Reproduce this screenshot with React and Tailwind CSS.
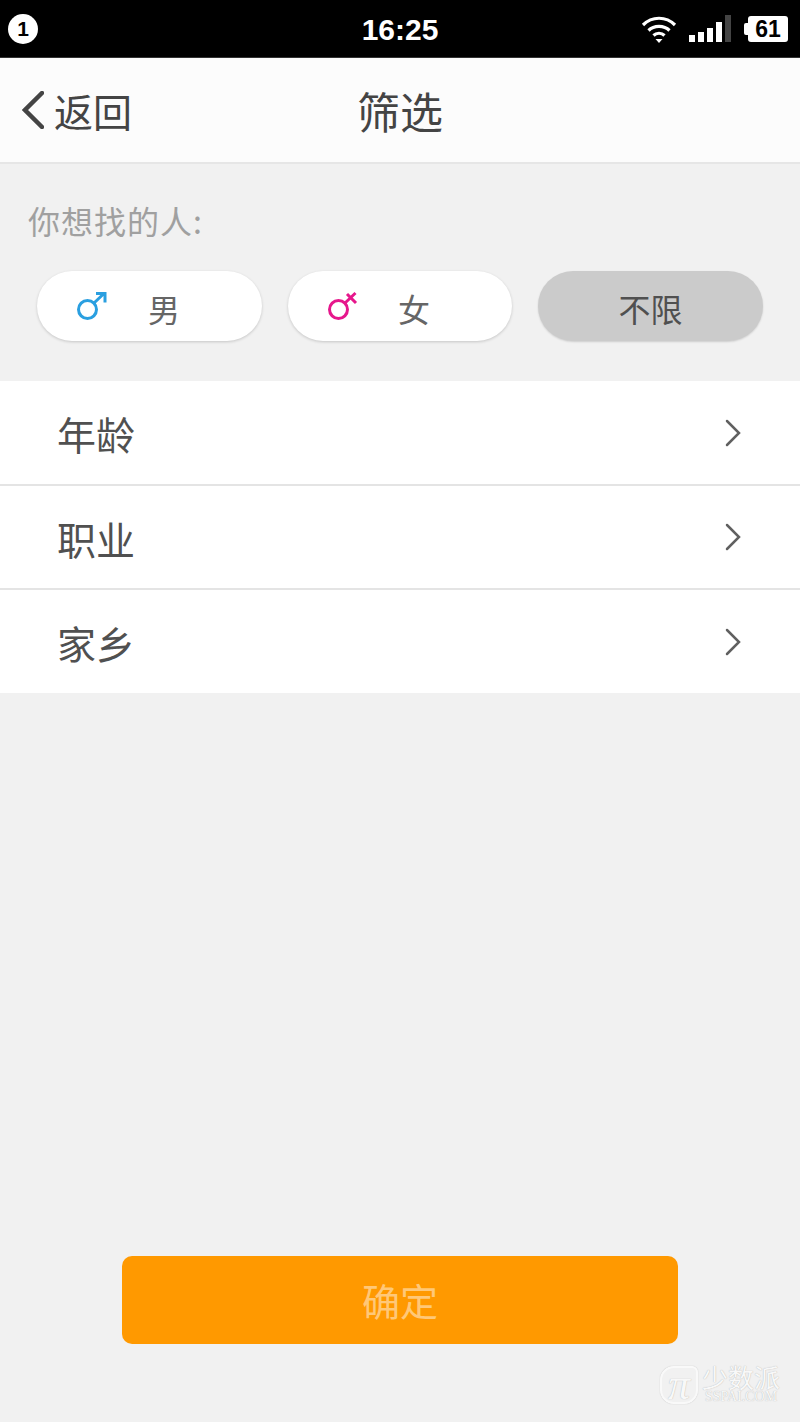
const cjk = { fontFamily: '"Noto Sans CJK SC", "Noto Sans", sans-serif' };
const helv = { fontFamily: '"Liberation Sans", sans-serif' };

function MaleIcon() {
    return (
        <svg width="32" height="32" viewBox="0 0 32 32" fill="none" stroke="#2a9fe0" strokeWidth="3">
            <circle cx="11.5" cy="19.5" r="9" />
            <path d="M18 13 L28 3.5 M20 3.5 H29 V12.5" />
        </svg>
    );
}

function FemaleIcon() {
    return (
        <svg width="32" height="32" viewBox="0 0 32 32" fill="none" stroke="#e6178c" strokeWidth="3">
            <circle cx="11.5" cy="19.5" r="9" />
            <path d="M18 13 L28.5 3 M20 4 L29 13" />
        </svg>
    );
}

function Row({ label, className }) {
    return (
        <div className={`flex items-center justify-between pl-[57px] pr-[58px] ${className}`}>
            <span className="pt-[2px] text-[39px] text-[#505050]">{label}</span>
            <svg width="18" height="28" viewBox="0 0 18 28" fill="none" stroke="#606060" strokeWidth="2.5" strokeLinecap="round">
                <path d="M3 2 L15 14 L3 26" />
            </svg>
        </div>
    );
}

export default function App() {
    return (
        <div className="relative flex h-[1422px] w-[800px] flex-col overflow-hidden bg-[#f1f1f1]" style={cjk}>
            {/* Status bar */}
            <div className="flex h-[58px] items-center justify-between border-b border-[#333] bg-black pl-[8px] pr-[12px]">
                <div className="flex h-[30px] w-[30px] items-center justify-center rounded-full bg-white text-[21px] font-bold text-black" style={helv}>1</div>
                <div className="absolute left-0 right-0 top-[9px] text-center text-[30px] font-bold leading-[42px] text-white" style={helv}>16:25</div>
                <div className="flex items-center">
                    <svg width="36" height="30" viewBox="0 0 36 30" fill="none" stroke="#fff" strokeWidth="3.2">
                        <path d="M2 11 C11 2 25 2 34 11" />
                        <path d="M7.5 16.5 C13 11 23 11 28.5 16.5" />
                        <path d="M12.5 21.5 C15.5 18.5 20.5 18.5 23.5 21.5" />
                        <path d="M14.5 25 L18 29 L21.5 25 Z" fill="#fff" stroke="none" />
                    </svg>
                    <div className="ml-[12px] flex h-[27px] items-end gap-[3px]">
                        <div className="h-[7px] w-[6px] bg-white" />
                        <div className="h-[10px] w-[6px] bg-white" />
                        <div className="h-[14px] w-[6px] bg-white" />
                        <div className="h-[20px] w-[6px] bg-white" />
                        <div className="h-[27px] w-[6px] bg-[#444]" />
                    </div>
                    <div className="ml-[13px] h-[12px] w-[4px] rounded-l-[2px] bg-white" />
                    <div className="flex h-[26px] w-[40px] items-center justify-center rounded-[3px] bg-white pt-[2px] text-[23px] font-bold text-black" style={helv}>61</div>
                </div>
            </div>

            {/* Header */}
            <div className="relative flex h-[106px] items-center justify-center border-b-2 border-[#e6e6e6] bg-[#fcfcfc]">
                <div className="absolute left-[22px] top-0 flex h-full items-center text-[#444]">
                    <svg width="22" height="38" viewBox="0 0 22 38" fill="none" stroke="#444" strokeWidth="4.5" strokeLinecap="round">
                        <path d="M20 2 L3 19 L20 36" />
                    </svg>
                    <span className="ml-[10px] text-[39px] leading-none">返回</span>
                </div>
                <span className="text-[43px] leading-none text-[#444]">筛选</span>
            </div>

            {/* Gender filter */}
            <div className="px-[28px] pt-[36px]">
                <div className="text-[32px] leading-[40px] tracking-[1px] text-[#a0a0a0]">你想找的人:</div>
                <div className="mt-[31px] flex gap-[26px] pl-[9px] pr-[9px]">
                    <button className="flex h-[70px] w-[225px] items-center rounded-full bg-white pl-[39px] text-[32px] text-[#666] shadow-[0_1px_3px_rgba(0,0,0,0.18)]">
                        <MaleIcon />
                        <span className="ml-[40px] pt-[3px]">男</span>
                    </button>
                    <button className="flex h-[70px] w-[224px] items-center rounded-full bg-white pl-[39px] text-[32px] text-[#666] shadow-[0_1px_3px_rgba(0,0,0,0.18)]">
                        <FemaleIcon />
                        <span className="ml-[39px] pt-[3px]">女</span>
                    </button>
                    <button className="flex h-[70px] w-[225px] items-center justify-center rounded-full bg-[#cbcbcb] pt-[3px] text-[32px] text-[#505050] shadow-[0_1px_2px_rgba(0,0,0,0.15)]">不限</button>
                </div>
            </div>

            {/* Options */}
            <div className="mt-[40px] bg-white">
                <Row label="年龄" className="h-[105px] border-b-2 border-[#e4e4e4]" />
                <Row label="职业" className="h-[104px] border-b-2 border-[#e4e4e4]" />
                <Row label="家乡" className="h-[103px]" />
            </div>

            {/* Confirm */}
            <div className="mt-auto flex justify-center pb-[78px]">
                <button className="h-[88px] w-[556px] rounded-[10px] bg-[#ff9900] pb-[2px] text-[38px] text-[#ffc878]">确定</button>
            </div>

            {/* Watermark */}
            <div className="absolute left-[660px] top-[1364px] flex items-start text-[#f8f8f8] [text-shadow:0_0_1px_#a8a8a8]">
                <div className="mt-[2px] flex h-[38px] w-[38px] items-center justify-center rounded-[14px] rounded-tr-[6px] border-2 border-[#f9f9f9] text-[44px] italic leading-none shadow-[0_0_1px_#a8a8a8]" style={{ fontFamily: '"Liberation Serif", serif' }}>π</div>
                <div className="ml-[4px] flex flex-col items-center">
                    <span className="text-[26px] leading-[26px]">少数派</span>
                    <span className="text-[14px] leading-[13px]" style={{ fontFamily: '"Liberation Serif", serif' }}>SSPAI.COM</span>
                </div>
            </div>
        </div>
    );
}
